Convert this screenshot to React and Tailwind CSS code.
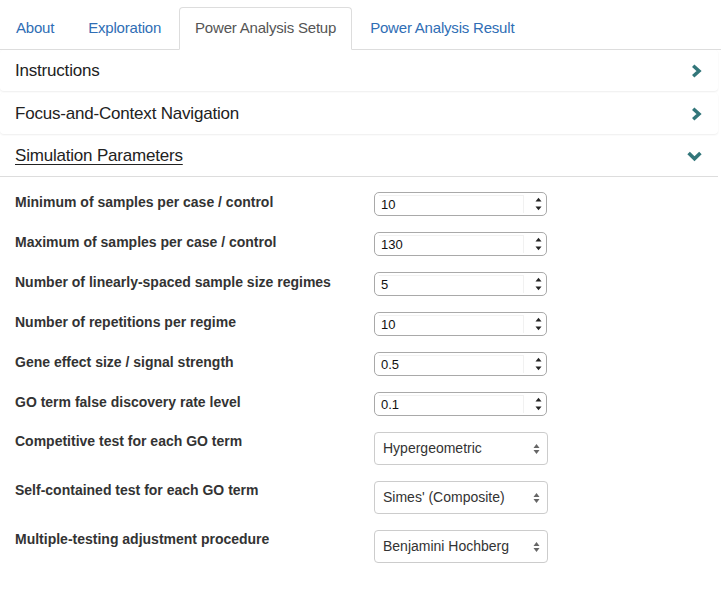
import { useState } from 'react'

const tabs = ['About', 'Exploration', 'Power Analysis Setup', 'Power Analysis Result']

const numberFields = [
  { label: 'Minimum of samples per case / control', value: '10' },
  { label: 'Maximum of samples per case / control', value: '130' },
  { label: 'Number of linearly-spaced sample size regimes', value: '5' },
  { label: 'Number of repetitions per regime', value: '10' },
  { label: 'Gene effect size / signal strength', value: '0.5' },
  { label: 'GO term false discovery rate level', value: '0.1' },
]

const selectFields = [
  { label: 'Competitive test for each GO term', value: 'Hypergeometric' },
  { label: 'Self-contained test for each GO term', value: "Simes' (Composite)" },
  { label: 'Multiple-testing adjustment procedure', value: 'Benjamini Hochberg' },
]

function ChevronRight() {
  return (
    <svg width="11" height="14" viewBox="0 0 11 14">
      <polyline points="2.2,1.8 8,7 2.2,12.2" fill="none" stroke="#32767a" strokeWidth="3.5" />
    </svg>
  )
}

function ChevronDown() {
  return (
    <svg width="15" height="11" viewBox="0 0 15 11">
      <polyline points="1.6,2 7.5,7.8 13.4,2" fill="none" stroke="#32767a" strokeWidth="3.6" />
    </svg>
  )
}

function Spinner() {
  return (
    <svg width="9" height="16" viewBox="0 0 9 16" className="mr-[3px]">
      <polygon points="1.5,5.5 4.5,1.8 7.5,5.5" fill="#222" />
      <polygon points="1.5,10.5 4.5,14.2 7.5,10.5" fill="#222" />
    </svg>
  )
}

function SelectArrows() {
  return (
    <svg width="7" height="12" viewBox="0 0 7 12">
      <polygon points="0.5,5 3.5,1 6.5,5" fill="#666" />
      <polygon points="0.5,7 3.5,11 6.5,7" fill="#666" />
    </svg>
  )
}

function Panel({ title, open, children }) {
  return (
    <div className={`bg-white rounded-[4px] mb-[2px] ${open ? '' : 'shadow-[0_1px_2px_rgba(0,0,0,0.07)]'}`}>
      <div className={`${open ? 'h-[40px]' : 'h-[41px]'} flex items-center justify-between pl-[15px] pr-[16px]`}>
        <span className={`text-[17px] text-[#222] tracking-[-0.2px] ${open ? 'underline underline-offset-[3px]' : ''}`}>{title}</span>
        {open ? <ChevronDown /> : <ChevronRight />}
      </div>
      {children}
    </div>
  )
}

export default function App() {
  const [active] = useState(2)

  return (
    <div className="w-[721px] h-[589px] bg-white font-['Liberation_Sans',Arial,sans-serif] text-[#333] overflow-hidden">
      <div className="pt-[7px] flex border-b border-[#ddd]">
        {tabs.map((t, i) => (
          <div
            key={t}
            className={
              i === active
                ? 'mr-[2px] -mb-px px-[15px] py-[10px] leading-[20px] text-[15px] tracking-[-0.2px] text-[#555] bg-white border border-[#ddd] border-b-white rounded-t-[4px]'
                : 'mr-[2px] px-[15px] py-[10px] leading-[20px] text-[15px] tracking-[-0.2px] text-[#2f6eb5] border border-transparent'
            }
          >
            {t}
          </div>
        ))}
      </div>

      <div className="w-[718px]">
        <Panel title="Instructions" />
        <Panel title="Focus-and-Context Navigation" />
        <Panel title="Simulation Parameters" open>
          <div className="border-t border-[#ddd] pt-[15px] pl-[15px] pb-[20px]">
            {numberFields.map((f) => (
              <div key={f.label} className="flex items-start mb-[16px]">
                <div className="w-[359px] font-bold text-[14px] leading-[20px]">{f.label}</div>
                <div className="w-[173px] h-[24px] border border-[#a9a9a9] rounded-[5px] flex items-center">
                  <div className="flex-1 ml-[4px] mr-[10px] h-[18px] border-t border-r border-[#f1f1f1] flex items-center pl-[2px] text-[13px] text-[#111]">
                    {f.value}
                  </div>
                  <Spinner />
                </div>
              </div>
            ))}
            {selectFields.map((f) => (
              <div key={f.label} className="flex items-start mb-[16px]">
                <div className="w-[359px] font-bold text-[14px] leading-[20px] -mt-px">{f.label}</div>
                <div className="w-[174px] h-[33px] border border-[#ccc] rounded-[4px] flex items-center justify-between pl-[8px] pr-[7px] text-[14px] text-[#333]">
                  <span>{f.value}</span>
                  <SelectArrows />
                </div>
              </div>
            ))}
          </div>
        </Panel>
      </div>
    </div>
  )
}
